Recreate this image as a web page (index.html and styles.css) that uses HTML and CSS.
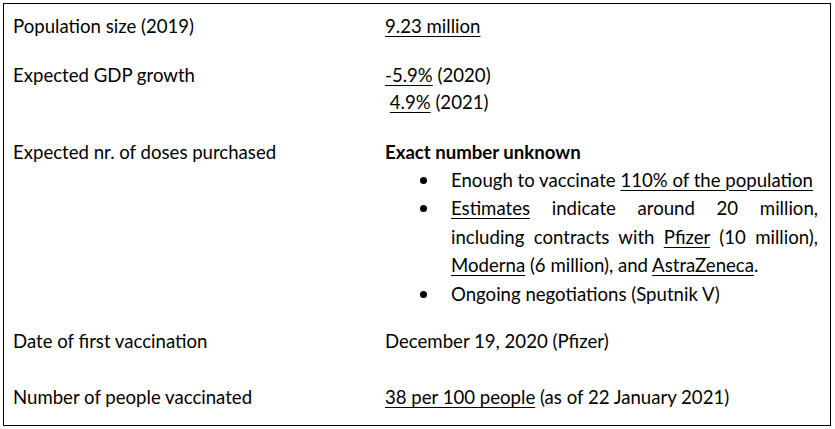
FILE: index.html
```html
<!DOCTYPE html>
<html lang="en">
<head>
<meta charset="utf-8">
<title>Vaccination facts</title>
<link rel="stylesheet" href="styles.css">
</head>
<body>
<div class="sheet">
  <div class="row r1">
    <div class="label">Population size (2019)</div>
    <div class="value"><u>9.23 million</u></div>
  </div>
  <div class="row r2">
    <div class="label">Expected GDP growth</div>
    <div class="value">
      <div><u>-5.9%</u> (2020)</div>
      <div>&nbsp;<u>4.9%</u> (2021)</div>
    </div>
  </div>
  <div class="row r3">
    <div class="label">Expected nr. of doses purchased</div>
    <div class="value">
      <div class="strong">Exact number unknown</div>
      <ul class="bullets">
        <li><div class="li-text">Enough to vaccinate <u>110% of the population</u></div></li>
        <li><div class="li-text">
          <span class="jline"><u>Estimates</u> indicate around 20 million,</span>
          <span class="jline">including contracts with <u>Pfizer</u> (10 million),</span>
          <span class="line"><u>Moderna</u> (6 million), and <u>AstraZeneca</u>.</span>
        </div></li>
        <li><div class="li-text">Ongoing negotiations (Sputnik V)</div></li>
      </ul>
    </div>
  </div>
  <div class="row r4">
    <div class="label">Date of first vaccination</div>
    <div class="value">December 19, 2020 (Pfizer)</div>
  </div>
  <div class="row r5">
    <div class="label">Number of people vaccinated</div>
    <div class="value"><u>38 per 100 people</u> (as of 22 January 2021)</div>
  </div>
</div>
</body>
</html>
```
FILE: styles.css
```css
html, body {
  margin: 0;
  padding: 0;
  background: #fff;
}
body {
  font-family: Lato, "Open Sans", "Liberation Sans", sans-serif;
  font-size: 18.6px;
  line-height: 27px;
  color: #000;
}
.sheet {
  box-sizing: border-box;
  width: 828px;
  height: 423px;
  margin: 3px 0 0 3px;
  border: 1px solid #000;
  padding: 8.5px 0 0 9px;
}
.row {
  display: grid;
  grid-template-columns: 372px 433px;
}
.r1 { margin-bottom: 22px; }
.r2 { margin-bottom: 23px; }
.r3 { margin-bottom: 20px; }
.r4 { margin-bottom: 29px; }
u {
  text-decoration: underline;
  text-decoration-thickness: 1px;
  text-underline-offset: 3px;
}
.strong { font-weight: 700; }
.bullets {
  list-style: none;
  margin: 0;
  padding: 0;
}
.bullets li {
  display: flex;
  line-height: 28.6px;
}
.bullets li::before {
  content: "";
  flex: none;
  width: 7px;
  height: 7px;
  border-radius: 50%;
  background: #000;
  margin: 11px 24px 0 35px;
}
.li-text { flex: 1; }
.jline {
  display: block;
  text-align: justify;
  text-align-last: justify;
}
.line { display: block; }
```
